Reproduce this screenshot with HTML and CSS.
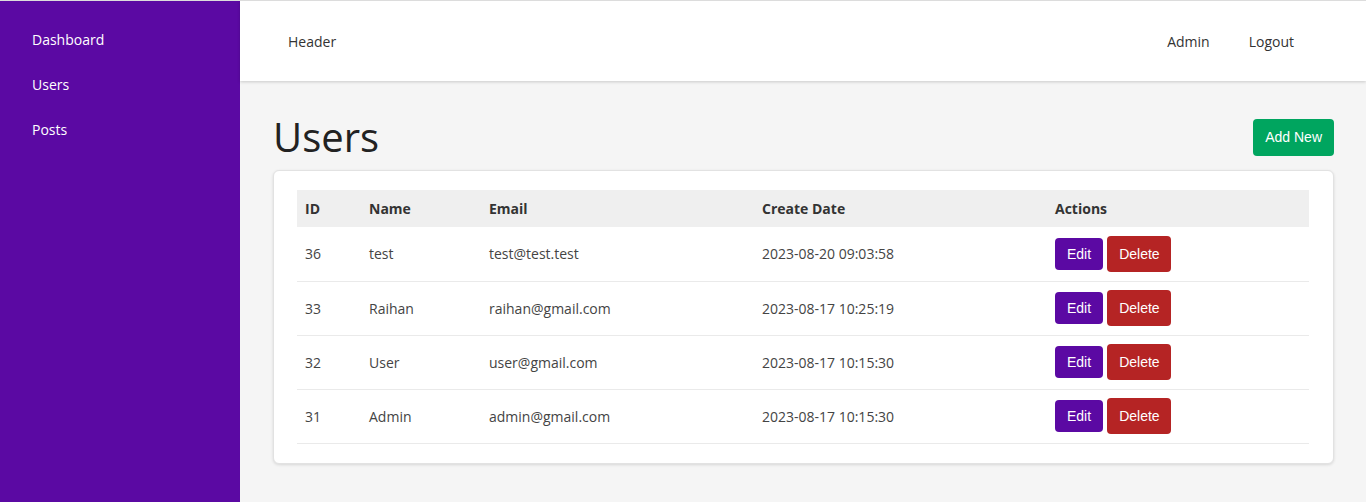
FILE: index.html
```html
<!DOCTYPE html>
<html>
<head>
<meta charset="utf-8">
<title>Users</title>
<link rel="stylesheet" href="styles.css">
</head>
<body>
<div class="app">
  <aside class="sidebar">
    <nav class="nav">
      <a class="nav-link" href="#">Dashboard</a>
      <a class="nav-link" href="#">Users</a>
      <a class="nav-link" href="#">Posts</a>
    </nav>
  </aside>
  <div class="main">
    <header class="topbar">
      <span class="brand">Header</span>
      <div class="top-links">
        <a class="top-link" href="#">Admin</a>
        <a class="top-link" href="#">Logout</a>
      </div>
    </header>
    <main class="content">
      <div class="title-row">
        <h1 class="title">Users</h1>
        <a class="btn btn-add" href="#">Add New</a>
      </div>
      <div class="card">
        <table class="table">
          <colgroup>
            <col class="c-id"><col class="c-name"><col class="c-email"><col class="c-date"><col class="c-actions">
          </colgroup>
          <thead>
            <tr><th>ID</th><th>Name</th><th>Email</th><th>Create Date</th><th>Actions</th></tr>
          </thead>
          <tbody>
            <tr><td>36</td><td>test</td><td>test@test.test</td><td>2023-08-20 09:03:58</td><td><div class="actions"><a class="btn btn-edit" href="#">Edit</a><button class="btn btn-delete">Delete</button></div></td></tr>
            <tr><td>33</td><td>Raihan</td><td>raihan@gmail.com</td><td>2023-08-17 10:25:19</td><td><div class="actions"><a class="btn btn-edit" href="#">Edit</a><button class="btn btn-delete">Delete</button></div></td></tr>
            <tr><td>32</td><td>User</td><td>user@gmail.com</td><td>2023-08-17 10:15:30</td><td><div class="actions"><a class="btn btn-edit" href="#">Edit</a><button class="btn btn-delete">Delete</button></div></td></tr>
            <tr><td>31</td><td>Admin</td><td>admin@gmail.com</td><td>2023-08-17 10:15:30</td><td><div class="actions"><a class="btn btn-edit" href="#">Edit</a><button class="btn btn-delete">Delete</button></div></td></tr>
          </tbody>
        </table>
      </div>
    </main>
  </div>
</div>
</body>
</html>
```
FILE: styles.css
```css
* { box-sizing: border-box; }
html, body { margin: 0; padding: 0; }
body {
  font-family: "Open Sans", "Liberation Sans", sans-serif;
  font-size: 14px;
  color: #333;
  background: #f5f5f5;
  border-top: 1px solid #dcdcdc;
  height: 502px;
  overflow: hidden;
}
.app { display: flex; height: 501px; }
.sidebar {
  width: 240px;
  flex: 0 0 240px;
  background: #5b09a3;
}
.nav { display: flex; flex-direction: column; padding-top: 16px; }
.nav-link {
  color: #fff;
  text-decoration: none;
  padding: 12px 32px;
  line-height: 21px;
  font-size: 14px;
}
.main { flex: 1; display: flex; flex-direction: column; min-width: 0; }
.topbar {
  height: 80px;
  background: #fff;
  display: flex;
  align-items: center;
  justify-content: space-between;
  padding: 0 72px 0 48px;
  box-shadow: 0 1px 3px rgba(0,0,0,0.18);
  position: relative;
  z-index: 1;
}
.brand { color: #333; }
.top-links { display: flex; gap: 39px; }
.top-link { color: #333; text-decoration: none; }
.content { padding: 31px 32px 32px 33px; }
.title-row {
  display: flex;
  justify-content: space-between;
  align-items: center;
  height: 50px;
  margin-bottom: 8px;
}
.title {
  margin: 0;
  font-size: 40px;
  font-weight: 400;
  line-height: 50px;
  color: #222;
}
.btn {
  font-family: "Liberation Sans", Arial, sans-serif;
  font-size: 14px;
  line-height: 16px;
  color: #fff;
  text-decoration: none;
  border: none;
  border-radius: 4px;
  padding: 8px 12px;
  display: inline-block;
  cursor: pointer;
}
.btn-add { background: #00a55f; padding: 10px 12px; height: 37px; line-height: 17px; }
.card {
  background: #fff;
  border: 1px solid #e2e2e2;
  border-radius: 6px;
  box-shadow: 0 1px 3px rgba(0,0,0,0.12);
  padding: 19px 23px;
}
.table {
  width: 1012px;
  border-collapse: collapse;
  table-layout: fixed;
}
.c-id { width: 64px; }
.c-name { width: 120px; }
.c-email { width: 273px; }
.c-date { width: 293px; }
.c-actions { width: 262px; }
.table th {
  background: #efefef;
  text-align: left;
  font-weight: 700;
  color: #333;
  padding: 8px;
  line-height: 21px;
  height: 37px;
}
.table td {
  padding: 8px;
  line-height: 21px;
  height: 54px;
  border-bottom: 1px solid #eaeaea;
  color: #444;
  vertical-align: middle;
}
.actions { display: flex; align-items: center; gap: 4px; }
.btn-edit { background: #5b09a3; height: 32px; }
.btn-delete { background: #b52424; padding: 10px 12px; height: 36px; width: 64px; }
```
